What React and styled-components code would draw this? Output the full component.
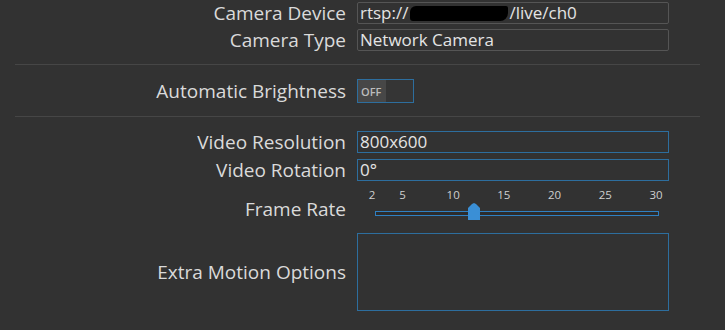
import React, { useState } from 'react'
import styled, { createGlobalStyle } from 'styled-components'

const GlobalStyle = createGlobalStyle`
  html, body {
    margin: 0;
    padding: 0;
    background: #323232;
  }
  body {
    font-family: 'Open Sans', 'Noto Sans', sans-serif;
    color: #dcdcdc;
  }
`

const Page = styled.div`
  width: 725px;
  height: 330px;
  overflow: hidden;
  padding-top: 2px;
  box-sizing: border-box;
`

const Section = styled.div`
  display: flex;
  flex-direction: column;
  gap: ${(p) => p.gap || 5}px;
`

const Row = styled.div`
  display: grid;
  grid-template-columns: 346px 312px;
  column-gap: 11px;
  align-items: center;
  min-height: ${(p) => p.h || 22}px;
`

const Label = styled.div`
  text-align: right;
  font-size: 19px;
  line-height: 22px;
  color: #dadada;
  white-space: nowrap;
`

const TextBox = styled.div`
  height: 22px;
  box-sizing: border-box;
  border: 1px solid ${(p) => (p.active ? '#2d6e9e' : '#555555')};
  border-radius: ${(p) => (p.active ? 0 : 2)}px;
  padding: 0 2px;
  font-size: 17px;
  line-height: 20px;
  color: #e4e4e4;
  white-space: nowrap;
  display: flex;
  align-items: center;
`

const Redacted = styled.span`
  display: inline-block;
  width: 98px;
  height: 15px;
  background: #000;
  border-radius: 6px 2px 8px 3px;
  margin: 0 1px 0 2px;
`

const Separator = styled.hr`
  margin: ${(p) => p.my}px 25px ${(p) => p.mb}px 15px;
  border: none;
  border-top: 1px solid #464646;
  height: 0;
`

const Toggle = styled.button`
  width: 57px;
  height: 24px;
  padding: 0;
  box-sizing: border-box;
  border: 1px solid #2d6e9e;
  background: #353535;
  display: flex;
  cursor: pointer;
`

const ToggleKnob = styled.span`
  width: 28px;
  height: 100%;
  background: #474747;
  color: #bcbcbc;
  font-family: 'Open Sans', sans-serif;
  font-size: 11px;
  font-weight: 600;
  display: flex;
  align-items: center;
  padding-left: 3px;
  box-sizing: border-box;
`

const SliderWrap = styled.div`
  position: relative;
  height: 34px;
`

const Tick = styled.span`
  position: absolute;
  top: 0;
  transform: translateX(-50%);
  font-size: 11.5px;
  color: #cfcfcf;
`

const Track = styled.div`
  position: absolute;
  left: 18px;
  top: 24px;
  width: 284px;
  height: 5px;
  box-sizing: border-box;
  border: 1px solid #2f80c2;
  background: #2c2c2c;
`

const Thumb = styled.svg`
  position: absolute;
  top: 16px;
  transform: translateX(-50%);
`

const TextArea = styled.div`
  height: 78px;
  box-sizing: border-box;
  border: 1px solid #2d6e9e;
`

const ticks = [2, 5, 10, 15, 20, 25, 30]
const tickX = (v) => 15 + ((v - 2) / 28) * 284

export default function App() {
  const [on, setOn] = useState(false)
  const [fps] = useState(12)
  return (
    <Page>
      <GlobalStyle />
      <Section>
        <Row>
          <Label>Camera Device</Label>
          <TextBox>
            rtsp://<Redacted />/live/ch0
          </TextBox>
        </Row>
        <Row>
          <Label>Camera Type</Label>
          <TextBox>Network Camera</TextBox>
        </Row>
      </Section>
      <Separator my={13} mb={14} />
      <Row h={24}>
        <Label>Automatic Brightness</Label>
        <Toggle onClick={() => setOn(!on)}>
          <ToggleKnob>{on ? 'ON' : 'OFF'}</ToggleKnob>
        </Toggle>
      </Row>
      <Separator my={13} mb={14} />
      <Section gap={6}>
        <Row>
          <Label>Video Resolution</Label>
          <TextBox active>800x600</TextBox>
        </Row>
        <Row>
          <Label>Video Rotation</Label>
          <TextBox active>0°</TextBox>
        </Row>
        <Row h={34}>
          <Label style={{ marginTop: 9 }}>Frame Rate</Label>
          <SliderWrap>
            {ticks.map((t) => (
              <Tick key={t} style={{ left: tickX(t) }}>
                {t}
              </Tick>
            ))}
            <Track />
            <Thumb width="12" height="17" viewBox="0 0 12 17" style={{ left: tickX(fps) + 1 }}>
              <path d="M0 5 L4 1 L6 0 L8 1 L12 5 L12 17 L0 17 Z" fill="#3a8fd6" />
            </Thumb>
          </SliderWrap>
        </Row>
      </Section>
      <Row h={78} style={{ marginTop: 12 }}>
        <Label>Extra Motion Options</Label>
        <TextArea />
      </Row>
    </Page>
  )
}
